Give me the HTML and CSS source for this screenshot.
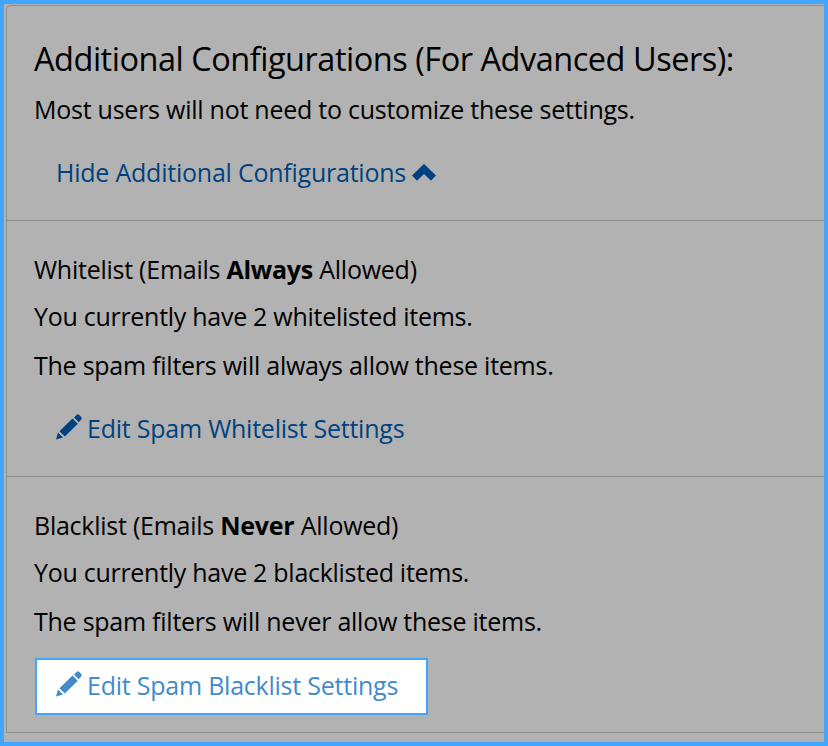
FILE: index.html
```html
<!DOCTYPE html>
<html lang="en">
<head>
<meta charset="utf-8">
<title>Additional Configurations</title>
<link rel="stylesheet" href="styles.css">
</head>
<body>
<main class="panel">
  <section class="group intro">
    <h1>Additional Configurations (For Advanced Users):</h1>
    <p>Most users will not need to customize these settings.</p>
    <a class="action">Hide Additional Configurations<svg class="chevron" width="24" height="17" viewBox="0 0 24 17"><path d="M12 0 24 11.5 19 16.8 12 10 5 16.8 0 11.5Z"/></svg></a>
  </section>
  <section class="group">
    <p class="label">Whitelist (Emails <b>Always</b> Allowed)</p>
    <p class="count">You currently have 2 whitelisted items.</p>
    <p>The spam filters will always allow these items.</p>
    <a class="action"><svg class="pencil" width="26" height="26" viewBox="0 0 26 26"><path d="M0 25.5 2 18.5 7 23.5ZM3.5 17.3 16.5 4.5 21.8 9.8 8.8 22.6ZM18 3.5 20.5 1Q22-.3 23.3 1L25.2 2.9Q26.3 4.2 25.2 5.5L22.8 8.2Z"/></svg>Edit Spam Whitelist Settings</a>
  </section>
  <section class="group">
    <p class="label">Blacklist (Emails <b>Never</b> Allowed)</p>
    <p class="count">You currently have 2 blacklisted items.</p>
    <p>The spam filters will never allow these items.</p>
    <a class="action highlighted"><svg class="pencil" width="26" height="26" viewBox="0 0 26 26"><path d="M0 25.5 2 18.5 7 23.5ZM3.5 17.3 16.5 4.5 21.8 9.8 8.8 22.6ZM18 3.5 20.5 1Q22-.3 23.3 1L25.2 2.9Q26.3 4.2 25.2 5.5L22.8 8.2Z"/></svg>Edit Spam Blacklist Settings</a>
  </section>
</main>
</body>
</html>
```
FILE: styles.css
```css
* { box-sizing: border-box; }
body { margin: 0; background: #b2b2b2; }
.panel {
  height: 746px;
  overflow: hidden;
  border: 4px solid #40a6ff;
  background: #b2b2b2;
  color: #000;
  font: 25px/36px "Open Sans", sans-serif;
  letter-spacing: -.25px;
  white-space: nowrap;
}
.group {
  height: 256px;
  margin-left: 2px;
  padding: 30px 0 0 27px;
  border-left: 1px solid #8c8f8c;
  border-bottom: 1px solid #8c8c8c;
}
.intro {
  height: 216px;
  margin-top: 1px;
  border-top: 1px solid #8c8f8c;
  border-top-left-radius: 5px;
}
h1 { margin: 0 0 9px; font-size: 32.5px; line-height: 46px; font-weight: 400; letter-spacing: -.48px; }
p { margin: 0; }
.label { margin-bottom: 11px; }
.count { margin-bottom: 13px; letter-spacing: -.28px; }
.action {
  display: flex;
  align-items: center;
  width: 393px;
  height: 58px;
  margin-top: 16px;
  padding-left: 22px;
  color: #00427f;
  letter-spacing: -.23px;
}
.chevron { flex: none; margin-left: 6px; fill: currentColor; }
.pencil { flex: none; margin: 0 5px 2px 0; fill: currentColor; }
.highlighted {
  height: 57px;
  margin: 19px 0 0 1px;
  padding: 0 0 4px 19px;
  border: 2px solid #42a5f9;
  background: #fff;
  color: #428bca;
}
```
